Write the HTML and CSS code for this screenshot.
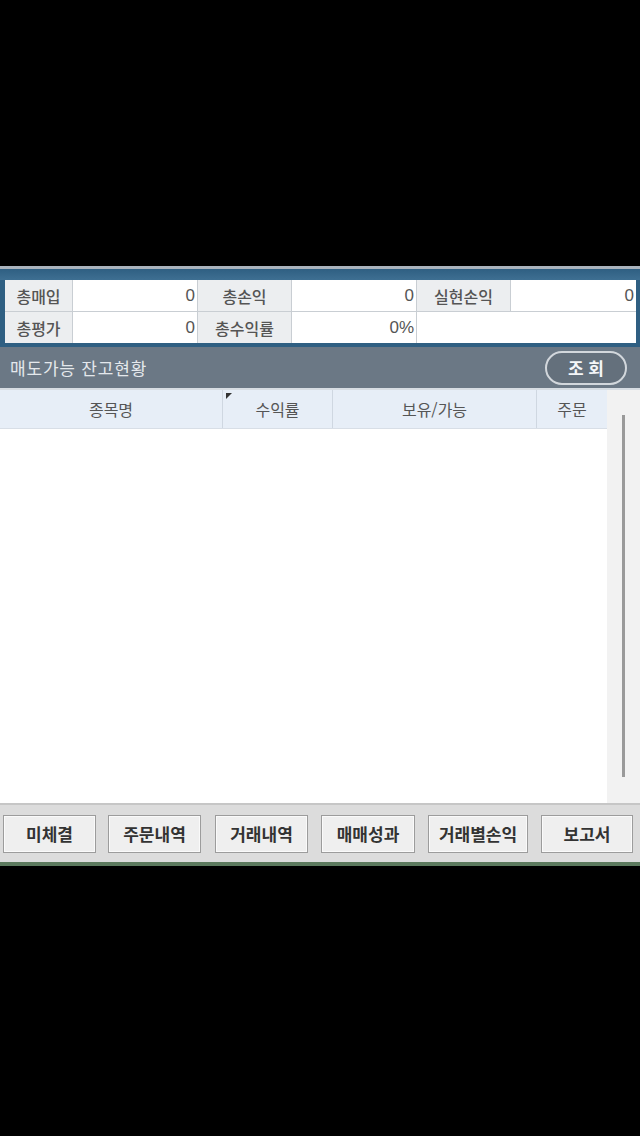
FILE: index.html
```html
<!DOCTYPE html>
<html lang="ko">
<head>
<meta charset="utf-8">
<link rel="stylesheet" href="styles.css">
</head>
<body>
<div class="top-black"></div>
<div class="window">
  <div class="topline"></div>
  <div class="bluebar"></div>
  <div class="summary">
    <div class="srow">
      <div class="lbl c1">총매입</div>
      <div class="val c2">0</div>
      <div class="lbl c3">총손익</div>
      <div class="val c4">0</div>
      <div class="lbl c5">실현손익</div>
      <div class="val c6">0</div>
    </div>
    <div class="srow">
      <div class="lbl c1">총평가</div>
      <div class="val c2">0</div>
      <div class="lbl c3">총수익률</div>
      <div class="val c4">0%</div>
      <div class="val c56"></div>
    </div>
  </div>
  <div class="bluebottom"></div>
  <div class="titlebar">
    <span class="title">매도가능 잔고현황</span>
    <span class="query">조 회</span>
  </div>
  <div class="grid">
    <div class="gmain">
      <div class="ghead">
        <div class="gh g1">종목명</div>
        <div class="gh g2"><span class="tri"></span>수익률</div>
        <div class="gh g3">보유/가능</div>
        <div class="gh g4">주문</div>
      </div>
      <div class="gbody"></div>
    </div>
    <div class="scroll"><div class="sline"></div></div>
  </div>
  <div class="btnbar">
    <span class="btn b1">미체결</span>
    <span class="btn b2">주문내역</span>
    <span class="btn b3">거래내역</span>
    <span class="btn b4">매매성과</span>
    <span class="btn b5">거래별손익</span>
    <span class="btn b6">보고서</span>
  </div>
  <div class="greenline"></div>
</div>
</body>
</html>
```
FILE: styles.css
```css
html, body {
  margin: 0;
  padding: 0;
  background: #000;
  width: 640px;
  height: 1136px;
  overflow: hidden;
  font-family: "Noto Sans CJK KR", "Noto Sans", sans-serif;
}
.top-black { height: 266px; }
.window { width: 640px; background: #fff; }
.topline { height: 3px; background: #a9b3bd; }
.bluebar {
  height: 11px;
  background: linear-gradient(#2f5f82, #3e6f92);
}
.summary {
  border-left: 5px solid #2f5f82;
  border-right: 4px solid #2f5f82;
  background: #c9ced3;
}
.srow { display: flex; height: 31px; }
.srow + .srow { border-top: 1px solid #c9ced3; }
.lbl, .val {
  box-sizing: border-box;
  display: flex;
  align-items: center;
  font-size: 16px;
  color: #555;
  border-right: 1px solid #c9ced3;
}
.lbl {
  background: #eceef0;
  justify-content: center;
  font-weight: 500;
}
.val {
  background: #fff;
  justify-content: flex-end;
  padding-right: 2px;
  font-family: "Liberation Sans", "Noto Sans", sans-serif;
  font-size: 17px;
}
.c1 { width: 68px; }
.c2 { width: 125px; }
.c3 { width: 94px; }
.c4 { width: 125px; }
.c5 { width: 94px; }
.c6 { width: 125px; border-right: none; }
.c56 { width: 219px; border-right: none; }
.bluebottom { height: 4px; background: #2f5f82; }
.titlebar {
  height: 41px;
  background: #6b7885;
  display: flex;
  align-items: center;
  justify-content: space-between;
  padding: 0 13px 0 10px;
  border-bottom: 2px solid #d7dde3;
}
.title {
  color: #e4e8ec;
  font-size: 17px;
  letter-spacing: 0.8px;
}
.query {
  box-sizing: border-box;
  width: 82px;
  height: 34px;
  border: 2px solid #d2d7dc;
  border-radius: 17px;
  background: #64707c;
  color: #f4f6f8;
  font-size: 17px;
  font-weight: bold;
  display: flex;
  align-items: center;
  justify-content: center;
}
.grid { display: flex; height: 413px; }
.gmain { width: 607px; display: flex; flex-direction: column; }
.ghead {
  display: flex;
  height: 38px;
  background: #e7eef7;
  border-bottom: 1px solid #d8dee6;
}
.gh {
  box-sizing: border-box;
  display: flex;
  align-items: center;
  justify-content: center;
  color: #555;
  font-size: 16px;
  border-right: 1px solid #cfd7e1;
  position: relative;
}
.g1 { width: 223px; }
.g2 { width: 110px; }
.g3 { width: 204px; }
.g4 { width: 70px; border-right: none; }
.tri {
  position: absolute;
  left: 3px;
  top: 3px;
  width: 0;
  height: 0;
  border-top: 6px solid #333;
  border-right: 6px solid transparent;
}
.gbody { flex: 1; background: #fff; }
.scroll {
  width: 33px;
  background: #f2f2f2;
  display: flex;
  justify-content: center;
  padding-top: 25px;
  padding-bottom: 26px;
  box-sizing: border-box;
}
.sline { width: 3px; background: #9a9a9a; margin-left: -1px; }
.btnbar {
  height: 59px;
  background: #dcdcdc;
  border-top: 2px solid #c6c6c6;
  display: flex;
  align-items: center;
  padding: 0 0 0 3px;
  box-sizing: border-box;
}
.btn {
  box-sizing: border-box;
  height: 38px;
  background: #efefef;
  border: 1px solid #9c9c9c;
  box-shadow: inset 0 0 0 1px #fafafa;
  display: flex;
  align-items: center;
  justify-content: center;
  font-size: 17px;
  color: #333;
  font-weight: bold;
}
.b1 { width: 93px; }
.b2 { width: 93px; margin-left: 12px; }
.b3 { width: 93px; margin-left: 14px; }
.b4 { width: 94px; margin-left: 13px; }
.b5 { width: 100px; margin-left: 13px; }
.b6 { width: 92px; margin-left: 13px; }
.greenline { height: 4px; background: #5c7a5e; }
```
